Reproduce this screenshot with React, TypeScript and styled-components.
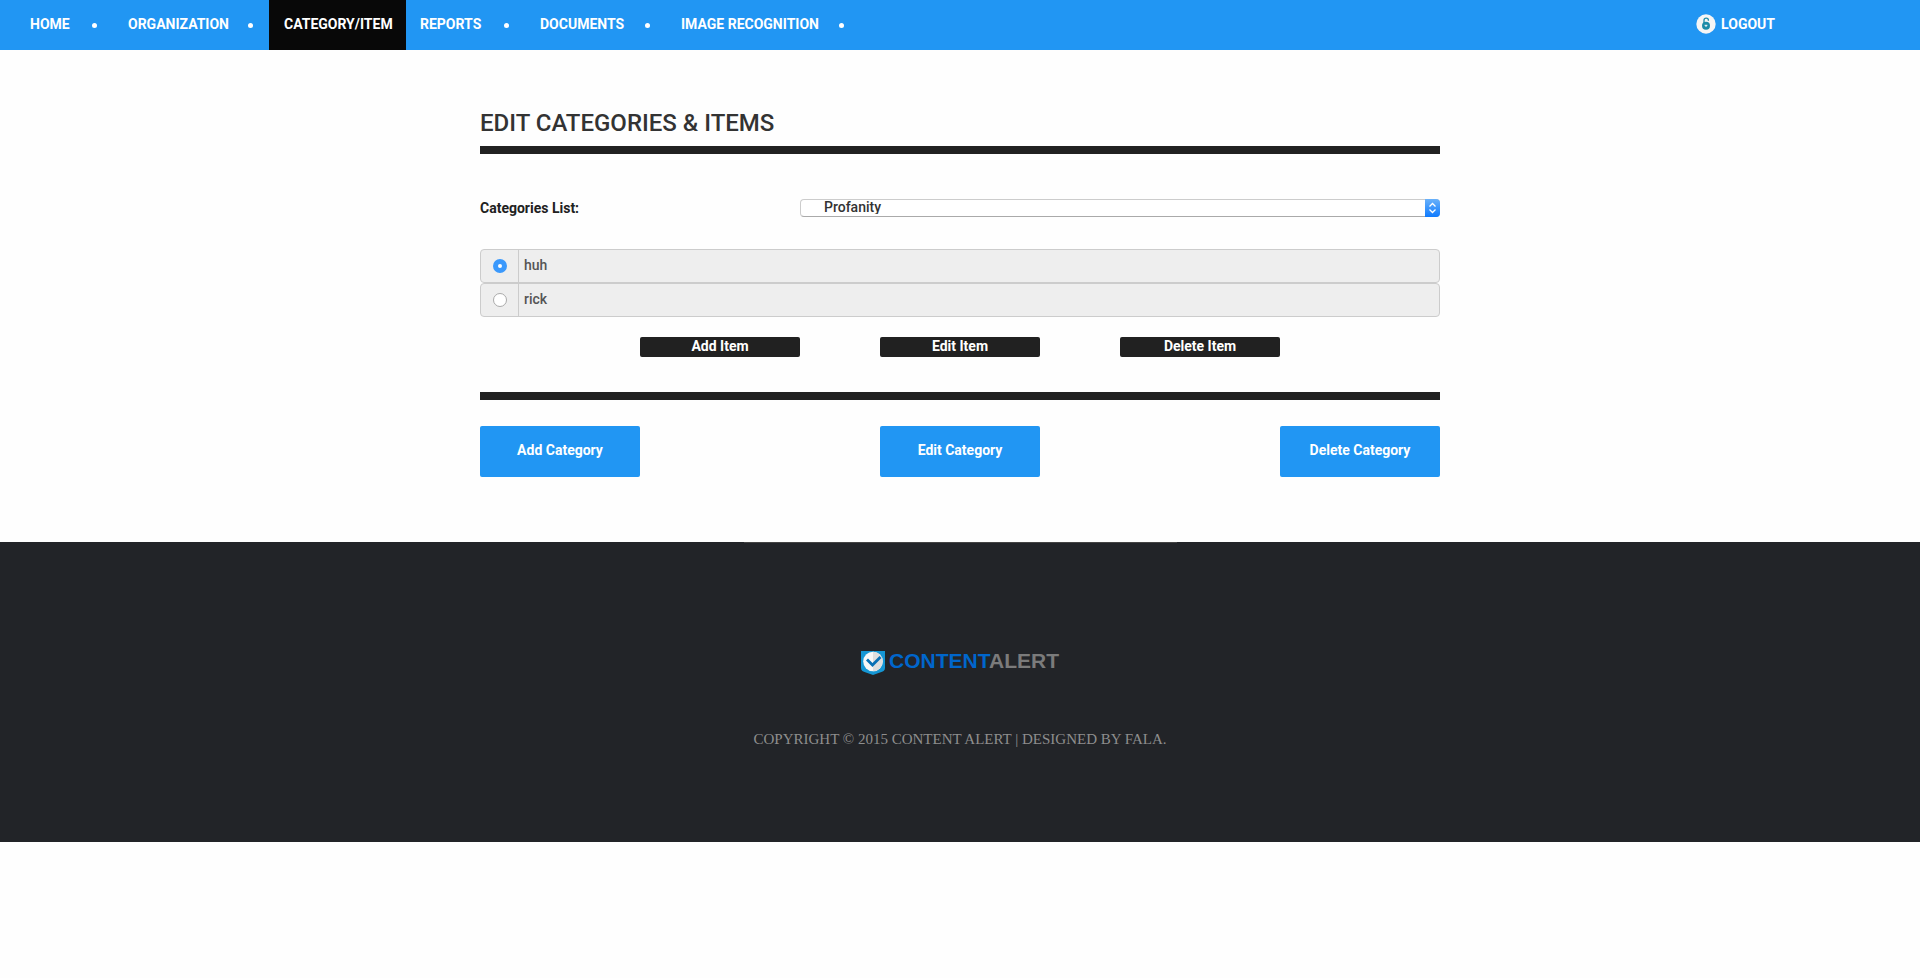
import React, { useState } from 'react';
import styled, { createGlobalStyle } from 'styled-components';

const blue = '#2196f3';
const ink = '#212121';

const GlobalStyle = createGlobalStyle`
  *, *::before, *::after { box-sizing: border-box; }
  body {
    margin: 0;
    background: #fefefe;
    color: ${ink};
    font: 500 14px/20px Roboto, "Liberation Sans", sans-serif;
  }
`;

const NavBar = styled.nav`
  display: flex;
  justify-content: space-between;
  height: 50px;
  padding-right: 132px;
  background: ${blue};
`;

const NavList = styled.ul`
  display: flex;
  margin: 0;
  padding: 0 0 0 15px;
  list-style: none;
`;

const NavItem = styled.li<{ $width: number }>`
  display: flex;
  width: ${(p) => p.$width}px;
`;

const NavLink = styled.a<{ $active?: boolean }>`
  display: flex;
  flex: 1;
  align-items: center;
  padding: 0 13px 2px 15px;
  background: ${(p) => (p.$active ? '#080808' : 'transparent')};
  color: #fff;
  font-weight: 700;
  text-decoration: none;
  text-transform: uppercase;
  white-space: nowrap;
`;

const LogoutLink = styled(NavLink)`
  flex: none;
  gap: 5px;
`;

const Dot = styled.span`
  flex: none;
  align-self: center;
  width: 5px;
  height: 5px;
  margin: 0 16px 0 5px;
  border-radius: 50%;
  background: #fff;
`;

const Main = styled.main`
  width: 50%;
  margin: 0 auto;
  padding: 57px 0 65px;
`;

const Title = styled.h1`
  margin: 0;
  color: #333;
  font-size: 24px;
  font-weight: 500;
  line-height: 32px;
  text-transform: uppercase;
`;

const Rule = styled.hr<{ $top: number }>`
  height: 8px;
  margin: ${(p) => p.$top}px 0 0;
  border: 0;
  background: ${ink};
`;

const Field = styled.div`
  display: grid;
  grid-template-columns: 1fr 2fr;
  align-items: center;
  margin-top: 44px;
`;

const FieldLabel = styled.label`
  font-weight: 700;
`;

const SelectWrap = styled.div`
  position: relative;
  height: 18px;
`;

const Select = styled.select`
  display: block;
  appearance: none;
  width: 100%;
  height: 18px;
  padding: 0 36px 2px 23px;
  border: 1px solid #ccc;
  border-bottom-color: #aaa;
  border-radius: 4px;
  background: #fff;
  color: #333;
  font: inherit;
  line-height: 14px;
`;

const SelectArrows = styled.svg`
  position: absolute;
  top: 0;
  right: 0;
  width: 15px;
  height: 18px;
  border-radius: 0 4px 4px 0;
  background: linear-gradient(#69b1fa, #0f7bff);
  pointer-events: none;
`;

const ItemList = styled.div`
  margin-top: 31px;
`;

const ItemRow = styled.label`
  display: flex;
  height: 34px;
  border: 1px solid #ccc;
  border-radius: 4px;
  background: #eee;
  color: #555;
`;

const RadioCell = styled.span`
  display: flex;
  align-items: center;
  justify-content: center;
  width: 38px;
  border-right: 1px solid #ccc;
`;

const Radio = styled.input`
  appearance: none;
  width: 14px;
  height: 14px;
  margin: 0;
  border: 1px solid #aaa;
  border-radius: 50%;
  background: #fff;

  &:checked {
    border: 5px solid #3b99fc;
  }
`;

const ItemName = styled.span`
  padding: 5px;
`;

const ButtonGrid = styled.div<{ $top: number }>`
  display: grid;
  grid-template-columns: repeat(12, 1fr);
  margin-top: ${(p) => p.$top}px;
`;

const Button = styled.button<{ $column: number; $large?: boolean }>`
  grid-column: ${(p) => p.$column} / span 2;
  height: ${(p) => (p.$large ? 51 : 20)}px;
  padding: 0 0 ${(p) => (p.$large ? 4 : 2)}px;
  border: 0;
  border-radius: 2px;
  background: ${(p) => (p.$large ? blue : ink)};
  color: #fff;
  font: inherit;
  font-weight: 700;
  line-height: 18px;
  cursor: pointer;
`;

const Footer = styled.footer`
  display: flex;
  flex-direction: column;
  align-items: center;
  height: 300px;
  background: #222428;
  text-align: center;
`;

const FooterLine = styled.div`
  width: 433px;
  height: 1px;
  background: #444;
`;

const Logo = styled.div`
  display: flex;
  align-items: flex-start;
  gap: 4px;
  margin-top: 108px;
  color: #0066cc;
  font: 700 21px/20px "Liberation Sans", sans-serif;
`;

const LogoTail = styled.span`
  color: #7b7b7b;
`;

const Copyright = styled.p`
  margin: 54px 0 0;
  color: #8e8e8e;
  font: 400 15px/20px "Liberation Serif", serif;
  text-transform: uppercase;
`;

const links = [
  { label: 'Home', width: 98 },
  { label: 'Organization', width: 156 },
  { label: 'Category/Item', width: 136, active: true },
  { label: 'Reports', width: 120 },
  { label: 'Documents', width: 141 },
  { label: 'Image Recognition', width: 194 },
];

const itemActions = [
  { label: 'Add Item', column: 3 },
  { label: 'Edit Item', column: 6 },
  { label: 'Delete Item', column: 9 },
];

const categoryActions = [
  { label: 'Add Category', column: 1 },
  { label: 'Edit Category', column: 6 },
  { label: 'Delete Category', column: 11 },
];

const LockIcon = () => (
  <svg width="20" height="20" viewBox="0 0 20 20" aria-hidden="true">
    <circle cx="10" cy="10" r="9.7" fill="#f5f5f5" />
    <path d="M8 9V6.200a2.200 2 0 0 1 4.400 0v.600" fill="none" stroke="#1b8ba8" strokeWidth="1.300" />
    <circle cx="10" cy="11.800" r="4" fill="#1b8ba8" />
    <path d="M8.600 11.300h2.800M10 11v2" stroke="#f5f5f5" strokeWidth="1" />
  </svg>
);

const ShieldIcon = () => (
  <svg width="24" height="24" viewBox="0 0 24 24" aria-hidden="true">
    <path d="M0 0h24v17c0 2.600-2 3.600-5 4.600L12 24l-7-2.400C2 20.600 0 19.600 0 17z" fill="#1596d4" />
    <circle cx="12" cy="10.500" r="9.800" fill="#f7f7f7" />
    <path d="M12 .700a9.800 9.800 0 0 1 0 19.600z" fill="#dedede" />
    <path d="M6 8.500l5.500 5.500 8-8" fill="none" stroke="#0870b5" strokeWidth="2.800" />
  </svg>
);

export default function App() {
  const [selected, setSelected] = useState('huh');

  return (
    <>
      <GlobalStyle />
      <NavBar>
        <NavList>
          {links.map((link) => (
            <NavItem key={link.label} $width={link.width}>
              <NavLink href="#" $active={link.active}>{link.label}</NavLink>
              {!link.active && <Dot />}
            </NavItem>
          ))}
        </NavList>
        <LogoutLink href="#"><LockIcon />Logout</LogoutLink>
      </NavBar>
      <Main>
        <Title>Edit Categories &amp; Items</Title>
        <Rule $top={7} />
        <Field>
          <FieldLabel htmlFor="category">Categories List:</FieldLabel>
          <SelectWrap>
            <Select id="category" defaultValue="Profanity">
              <option>Profanity</option>
            </Select>
            <SelectArrows viewBox="0 0 15 18" aria-hidden="true">
              <path d="M4.500 7.500l3-3 3 3M4.500 10.500l3 3 3-3" fill="none" stroke="#fff" strokeWidth="1.300" />
            </SelectArrows>
          </SelectWrap>
        </Field>
        <ItemList role="radiogroup" aria-label="Items">
          {['huh', 'rick'].map((name) => (
            <ItemRow key={name}>
              <RadioCell>
                <Radio type="radio" name="item" checked={selected === name} onChange={() => setSelected(name)} />
              </RadioCell>
              <ItemName>{name}</ItemName>
            </ItemRow>
          ))}
        </ItemList>
        <ButtonGrid $top={20}>
          {itemActions.map((a) => (
            <Button key={a.label} type="button" $column={a.column}>{a.label}</Button>
          ))}
        </ButtonGrid>
        <Rule $top={35} />
        <ButtonGrid $top={26}>
          {categoryActions.map((a) => (
            <Button key={a.label} type="button" $column={a.column} $large>{a.label}</Button>
          ))}
        </ButtonGrid>
      </Main>
      <Footer>
        <FooterLine />
        <Logo>
          <ShieldIcon />
          <span>CONTENT<LogoTail>ALERT</LogoTail></span>
        </Logo>
        <Copyright>Copyright © 2015 Content Alert | Designed by Fala.</Copyright>
      </Footer>
    </>
  );
}
